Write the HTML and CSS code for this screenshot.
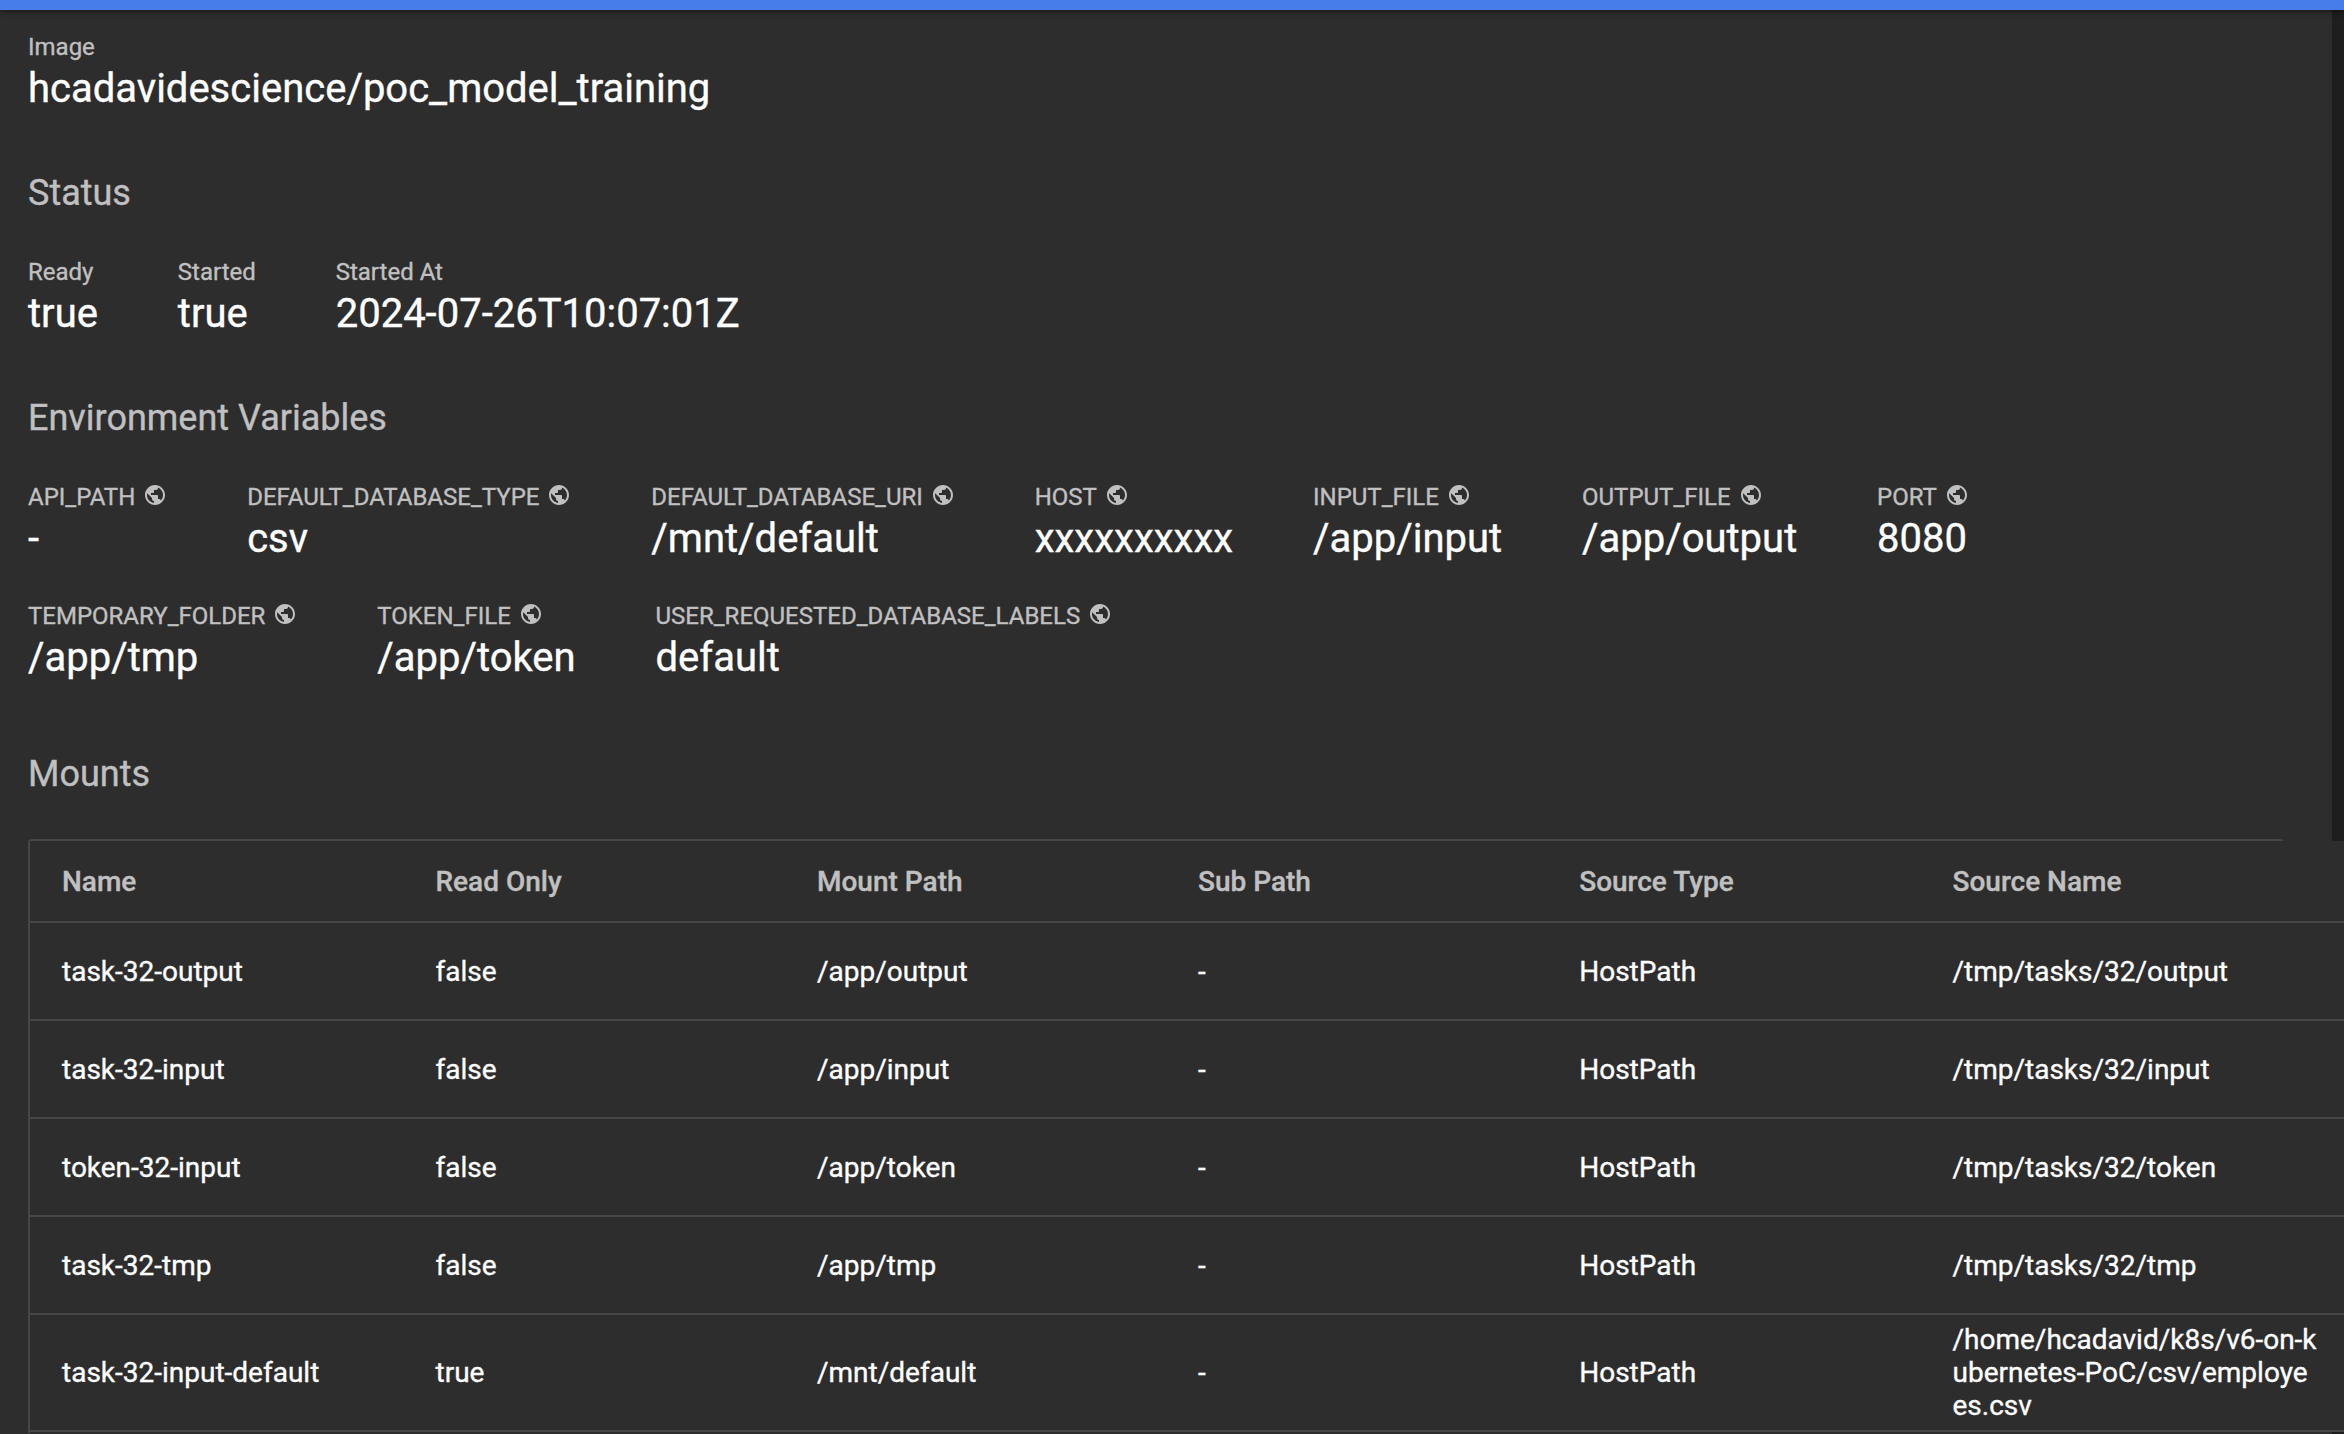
FILE: index.html
```html
<!DOCTYPE html>
<html lang="en">
<head>
<meta charset="utf-8">
<title>Container details</title>
<link rel="stylesheet" href="styles.css">
</head>
<body>
<svg class="sprite" aria-hidden="true">
  <symbol id="public" viewBox="0 0 24 24"><path d="M12 2C6.48 2 2 6.48 2 12s4.48 10 10 10 10-4.48 10-10S17.52 2 12 2zm-1 17.93c-3.95-.49-7-3.85-7-7.93 0-.62.08-1.21.21-1.79L9 15v1c0 1.1.9 2 2 2v1.93zm6.9-2.54c-.26-.81-1-1.39-1.9-1.39h-1v-3c0-.55-.45-1-1-1H8v-2h2c.55 0 1-.45 1-1V7h2c1.1 0 2-.9 2-2v-.41c2.93 1.19 5 4.06 5 7.41 0 2.08-.8 3.97-2.1 5.39z"/></symbol>
</svg>
<header class="toolbar"></header>
<main class="content">
  <section class="card">
    <div class="props">
      <div class="prop"><div class="key">Image</div><div class="value">hcadavidescience/poc_model_training</div></div>
    </div>
    <h2 class="title">Status</h2>
    <div class="props">
      <div class="prop"><div class="key">Ready</div><div class="value">true</div></div>
      <div class="prop"><div class="key">Started</div><div class="value">true</div></div>
      <div class="prop"><div class="key">Started At</div><div class="value">2024-07-26T10:07:01Z</div></div>
    </div>
    <h2 class="title">Environment Variables</h2>
    <div class="props">
      <div class="prop"><div class="key">API_PATH<svg class="icon"><use href="#public"/></svg></div><div class="value">-</div></div>
      <div class="prop"><div class="key">DEFAULT_DATABASE_TYPE<svg class="icon"><use href="#public"/></svg></div><div class="value">csv</div></div>
      <div class="prop"><div class="key">DEFAULT_DATABASE_URI<svg class="icon"><use href="#public"/></svg></div><div class="value">/mnt/default</div></div>
      <div class="prop"><div class="key">HOST<svg class="icon"><use href="#public"/></svg></div><div class="value">xxxxxxxxxx</div></div>
      <div class="prop"><div class="key">INPUT_FILE<svg class="icon"><use href="#public"/></svg></div><div class="value">/app/input</div></div>
      <div class="prop"><div class="key">OUTPUT_FILE<svg class="icon"><use href="#public"/></svg></div><div class="value">/app/output</div></div>
      <div class="prop"><div class="key">PORT<svg class="icon"><use href="#public"/></svg></div><div class="value">8080</div></div>
    </div>
    <div class="props next">
      <div class="prop"><div class="key">TEMPORARY_FOLDER<svg class="icon"><use href="#public"/></svg></div><div class="value">/app/tmp</div></div>
      <div class="prop"><div class="key">TOKEN_FILE<svg class="icon"><use href="#public"/></svg></div><div class="value">/app/token</div></div>
      <div class="prop"><div class="key">USER_REQUESTED_DATABASE_LABELS<svg class="icon"><use href="#public"/></svg></div><div class="value">default</div></div>
    </div>
    <h2 class="title mounts">Mounts</h2>
    <div class="frame">
      <div class="table">
        <div class="row head"><div>Name</div><div>Read Only</div><div>Mount Path</div><div>Sub Path</div><div>Source Type</div><div>Source Name</div></div>
        <div class="row"><div>task-32-output</div><div>false</div><div>/app/output</div><div>-</div><div>HostPath</div><div>/tmp/tasks/32/output</div></div>
        <div class="row"><div>task-32-input</div><div>false</div><div>/app/input</div><div>-</div><div>HostPath</div><div>/tmp/tasks/32/input</div></div>
        <div class="row"><div>token-32-input</div><div>false</div><div>/app/token</div><div>-</div><div>HostPath</div><div>/tmp/tasks/32/token</div></div>
        <div class="row"><div>task-32-tmp</div><div>false</div><div>/app/tmp</div><div>-</div><div>HostPath</div><div>/tmp/tasks/32/tmp</div></div>
        <div class="row tall"><div>task-32-input-default</div><div>true</div><div>/mnt/default</div><div>-</div><div>HostPath</div><div>/home/hcadavid/k8s/v6-on-kubernetes-PoC/csv/employees.csv</div></div>
      </div>
    </div>
  </section>
</main>
</body>
</html>
```
FILE: styles.css
```css
* { box-sizing: border-box; }
body {
  margin: 0;
  height: 1434px;
  overflow: hidden;
  background: #1e1e1e;
  color: #fff;
  font-family: Roboto, sans-serif;
  font-size: 28px;
  -webkit-text-stroke: .35px currentColor;
}
.sprite { display: none; }
.toolbar {
  position: relative;
  z-index: 1;
  height: 10px;
  background: #477ceb;
  box-shadow: 0 1px 6px rgba(0, 0, 0, .6);
}
.card {
  width: 2332px;
  height: 1424px;
  padding: 22px 48px 0 28px;
  background: #2d2d2d;
}
.props { display: flex; gap: 79.9px; height: 87px; }
.props.next { margin-top: 32px; }
.prop { white-space: nowrap; }
.key {
  display: flex;
  align-items: center;
  height: 30px;
  color: #c0c0c0;
  font-size: 24px;
  line-height: 30px;
}
.icon { width: 24px; height: 24px; margin: -4px 0 0 8px; fill: currentColor; }
.value { font-size: 40px; line-height: 48px; margin-top: 3px; }
.title {
  margin: 54px 0 44px;
  color: #c0c0c0;
  font-size: 36px;
  font-weight: 400;
  line-height: 40px;
}
.title.mounts { margin: 66px 0 45px; }
.frame {
  width: 2256px;
  padding-bottom: 1px;
  border: 2px solid #464646;
  border-width: 2px 0 0 2px;
  border-radius: 4px 4px 0 0;
}
.table { width: 2314px; background: #2d2d2d; }
.row {
  display: grid;
  grid-template-columns: 373.5px 381.5px 381px 381.2px 373.3px 367px;
  align-items: center;
  height: 98px;
  padding-left: 32px;
  border-bottom: 2px solid #464646;
  line-height: 33px;
  word-break: break-all;
}
.head { height: 82px; color: #c0c0c0; font-weight: 500; }
.tall { height: 117px; }
```
